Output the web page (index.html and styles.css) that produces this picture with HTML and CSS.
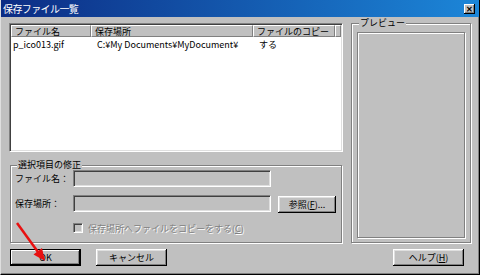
FILE: index.html
```html
<!DOCTYPE html>
<html>
<head>
<title>保存ファイル一覧</title>
<link rel="stylesheet" href="styles.css">
</head>

<body>

    <div class="window">
        <div class="titlebar">
            <span class="title">保存ファイル一覧</span>
            <span class="close">✕</span>
        </div>

        <div class="main">
            <div class="left">
                <div class="listview">
                    <div class="list-head">
                        <span class="col c1">ファイル名</span>
                        <span class="col c2">保存場所</span>
                        <span class="col c3">ファイルのコピー</span>
                        <span class="col c4"></span>
                    </div>
                    <div class="list-row">
                        <span class="c1">p_ico013.gif</span>
                        <span class="c2">C:¥My Documents¥MyDocument¥</span>
                        <span class="c3">する</span>
                    </div>
                </div>

                <fieldset class="group edit">
                    <legend>選択項目の修正</legend>
                    <div class="field-row">
                        <label>ファイル名：</label>
                        <span class="textbox"></span>
                    </div>
                    <div class="field-row">
                        <label>保存場所：</label>
                        <span class="textbox"></span>
                        <button class="btn browse">参照(<u>F</u>)...</button>
                    </div>
                    <div class="check-row">
                        <span class="checkbox"></span>
                        <span class="disabled">保存場所へファイルをコピーをする(<u>C</u>)</span>
                    </div>
                </fieldset>
            </div>

            <fieldset class="group preview">
                <legend>プレビュー</legend>
                <div class="preview-pane"></div>
            </fieldset>
        </div>

        <div class="buttons">
            <button class="btn default">OK</button>
            <button class="btn">キャンセル</button>
            <button class="btn help">ヘルプ(<u>H</u>)</button>
        </div>

        <!-- red arrow pointing at OK -->
        <svg class="arrow" width="480" height="275" viewBox="0 0 480 275">
            <line x1="17" y1="223" x2="38" y2="252" stroke="#e81010" stroke-width="2.5"/>
            <polygon points="45,261 42,248 33.5,254.5" fill="#e81010"/>
        </svg>
    </div>

</body>
</html>
```

FILE: styles.css
```css
    body {
        margin: 0;
        font-family: "Noto Sans CJK JP", "Liberation Sans", sans-serif;
        font-size: 9px;
        color: #000;
    }

    .window {
        position: relative;
        width: 480px;
        height: 275px;
        box-sizing: border-box;
        background: #c0c0c0;
        border-left: 1px solid #dfdfdf;
        border-right: 1px solid #000;
        border-bottom: 1px solid #000;
        box-shadow: inset -1px -1px #808080;
    }

    .titlebar {
        height: 17px;
        display: flex;
        align-items: center;
        justify-content: space-between;
        padding: 0 4px 0 2px;
        background: linear-gradient(90deg, #0c2c84, #1c86d8);
        color: #fff;
    }

    .title {
        font-size: 10px;
        letter-spacing: -0.6px;
    }

    .close {
        width: 11px;
        height: 10px;
        display: flex;
        align-items: center;
        justify-content: center;
        background: #c0c0c0;
        color: #000;
        font-size: 8px;
        font-weight: bold;
        box-shadow: inset -1px -1px #000, inset 1px 1px #fff, inset -2px -2px #808080;
    }

    .main {
        display: grid;
        grid-template-columns: 334px 120px;
        column-gap: 8px;
        padding: 1px 0 0 8px;
    }

    .left {
        display: flex;
        flex-direction: column;
    }

    .listview {
        margin-top: 5px;
        height: 129px;
        box-sizing: border-box;
        background: #fff;
        border: 1px solid;
        border-color: #808080 #fff #fff #808080;
        box-shadow: inset 1px 1px #404040, inset -1px -1px #dfdfdf;
        padding: 1px;
    }

    .list-head {
        display: flex;
        height: 12px;
        line-height: 11px;
    }

    .list-head .col {
        box-sizing: border-box;
        background: #c0c0c0;
        border-top: 1px solid #fff;
        border-left: 1px solid #fff;
        border-right: 1px solid #808080;
        border-bottom: 1px solid #808080;
        padding-left: 3px;
        white-space: nowrap;
    }

    .c1 { width: 80px; }
    .c2 { width: 162px; }
    .c3 { width: 82px; }
    .c4 { flex: 1; }

    .list-row {
        display: flex;
        height: 13px;
        line-height: 13px;
        margin-top: 1px;
        white-space: nowrap;
    }

    .list-row span {
        box-sizing: border-box;
        padding-left: 6px;
    }

    .list-row .c1 {
        padding-left: 2px;
    }

    .group {
        margin: 0;
        border: 1px solid #808080;
        box-shadow: inset 1px 1px #fff, 1px 1px #fff;
        min-width: 0;
    }

    .group legend {
        line-height: 10px;
        padding: 0 1px;
        margin-left: 2px;
        background: #c0c0c0;
    }

    .edit {
        margin: 8px 1px 0 1px;
        padding: 0 4px 9px 4px;
    }

    .field-row {
        display: flex;
        align-items: center;
        height: 17px;
        margin-bottom: 8px;
    }

    .field-row label {
        width: 58px;
        flex: none;
    }

    .textbox {
        width: 198px;
        height: 17px;
        box-sizing: border-box;
        border: 1px solid;
        border-color: #808080 #fff #fff #808080;
        box-shadow: inset 1px 1px #404040, inset -1px -1px #dfdfdf;
    }

    .check-row {
        display: flex;
        align-items: center;
        height: 10px;
        margin-top: 11px;
        padding-left: 58px;
    }

    .checkbox {
        width: 10px;
        height: 10px;
        box-sizing: border-box;
        margin-right: 5px;
        border: 1px solid;
        border-color: #808080 #fff #fff #808080;
        box-shadow: inset 1px 1px #404040, inset -1px -1px #dfdfdf;
    }

    .disabled {
        color: #808080;
        text-shadow: 1px 1px 0 #fff;
        white-space: nowrap;
    }

    .preview {
        display: flex;
        flex-direction: column;
        padding: 4px 5px 4px 5px;
    }

    .preview-pane {
        flex: 1;
        border: 1px solid #808080;
        box-shadow: inset 1px 1px #fff, 1px 1px #fff;
    }

    .btn {
        height: 17px;
        width: 71px;
        padding: 0;
        border: none;
        background: #c0c0c0;
        font-family: inherit;
        font-size: 9px;
        color: #000;
        box-shadow: inset -1px -1px #000, inset 1px 1px #fff, inset -2px -2px #808080, inset 2px 2px #dfdfdf;
    }

    .btn.default {
        box-shadow: inset 0 0 0 1px #000, inset -2px -2px #000, inset 2px 2px #fff, inset -3px -3px #808080;
    }

    .browse {
        width: 58px;
        margin-left: 7px;
        margin-top: 2px;
    }

    .buttons {
        display: flex;
        gap: 15px;
        padding: 6px 15px 0 9px;
    }

    .help {
        margin-left: auto;
    }

    .arrow {
        position: absolute;
        left: -1px;
        top: 0;
        pointer-events: none;
    }
```
